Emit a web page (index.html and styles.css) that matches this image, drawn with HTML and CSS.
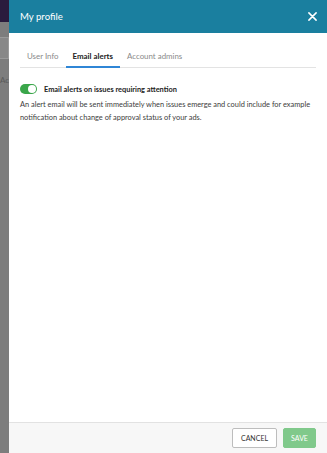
FILE: index.html
```html
<!DOCTYPE html>
<html>
<head>
<meta charset="utf-8">
<link rel="stylesheet" href="styles.css">
</head>
<body>
<div class="backdrop">
  <div class="bd-top"></div>
  <div class="bd-box"></div>
  <div class="bd-text">Ac</div>
</div>
<div class="panel">
  <header class="head">
    <h1 class="title">My profile</h1>
    <svg class="close" width="9" height="9" viewBox="0 0 10 10"><path d="M1 1L9 9M9 1L1 9" stroke="#fff" stroke-width="1.7" stroke-linecap="round"/></svg>
  </header>
  <div class="body">
    <nav class="tabs">
      <span class="tab">User Info</span>
      <span class="tab active">Email alerts</span>
      <span class="tab">Account admins</span>
    </nav>
    <div class="setting">
      <span class="toggle"><span class="knob"></span></span>
      <span class="label">Email alerts on issues requiring attention</span>
    </div>
    <p class="desc">An alert email will be sent immediately when issues emerge and could include for example notification about change of approval status of your ads.</p>
  </div>
  <footer class="foot">
    <button class="btn cancel">CANCEL</button>
    <button class="btn save">SAVE</button>
  </footer>
</div>
</body>
</html>
```
FILE: styles.css
```css
* { box-sizing: border-box; }
html, body { margin: 0; height: 100%; }
body {
  display: flex;
  font-family: Lato, "Open Sans", sans-serif;
  overflow: hidden;
  background: #7a7a7a;
}
.backdrop {
  width: 9px;
  flex: none;
  display: flex;
  flex-direction: column;
  background: #7d7d7d;
  overflow: hidden;
}
.bd-top { height: 22px; background: #2a1b3d; }
.bd-box { height: 22px; margin-top: 15px; border: 1px solid #9a9a9a; border-left: none; background: #888; }
.bd-text { margin-top: 16px; font-size: 8px; color: #5a5a5a; white-space: nowrap; }
.panel {
  flex: 1;
  display: flex;
  flex-direction: column;
  background: #fff;
}
.head {
  height: 33px;
  flex: none;
  background: #1a7f9f;
  display: flex;
  align-items: center;
  justify-content: space-between;
  padding: 0 10px 0 11px;
}
.title {
  margin: 0;
  font-size: 9.6px;
  font-weight: 400;
  color: #fff;
}
.close { display: block; }
.body {
  flex: 1;
  padding: 0 11px;
}
.tabs {
  display: flex;
  margin-top: 16px;
  border-bottom: 1px solid #e3e3e3;
}
.tab {
  padding: 2px 7px 5px;
  font-size: 7.9px;
  color: #8a8a8a;
  border-bottom: 2px solid transparent;
  margin-bottom: -1px;
}
.tab.active {
  color: #222;
  font-weight: 700;
  border-bottom-color: #2f86d6;
}
.setting {
  display: flex;
  align-items: center;
  margin-top: 16px;
}
.toggle {
  width: 17px;
  height: 10px;
  border-radius: 5px;
  background: #3aa64a;
  position: relative;
  flex: none;
}
.knob {
  position: absolute;
  right: 1px;
  top: 1px;
  width: 8px;
  height: 8px;
  border-radius: 50%;
  background: #fff;
}
.label {
  margin-left: 7px;
  font-size: 7.4px;
  font-weight: 700;
  color: #222;
}
.desc {
  margin: 4px 0 0;
  font-size: 7.4px;
  line-height: 13px;
  color: #3c3c3c;
}
.foot {
  height: 31px;
  flex: none;
  border-top: 1px solid #e2e2e2;
  background: #f7f7f7;
  display: flex;
  align-items: center;
  justify-content: flex-end;
  padding: 0 11px 0 0;
  gap: 6px;
}
.btn {
  height: 20px;
  font-family: inherit;
  font-size: 7px;
  border-radius: 2px;
  padding: 0;
}
.cancel {
  width: 45px;
  background: #fff;
  border: 1px solid #bdbdbd;
  color: #333;
}
.save {
  width: 33px;
  background: #80c98b;
  border: 1px solid #80c98b;
  color: #fff;
}
```
